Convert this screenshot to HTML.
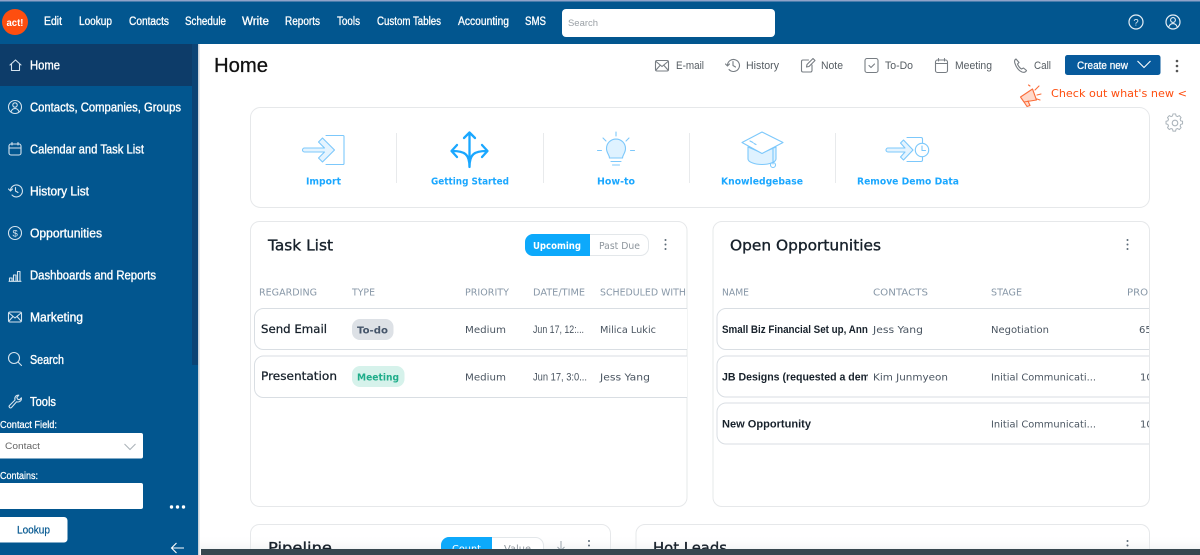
<!DOCTYPE html>
<html lang="en">
<head>
<meta charset="utf-8">
<title>Home</title>
<style>
html,body{margin:0;padding:0;width:1200px;height:555px;overflow:hidden;background:#fff}
svg{display:block}
text{font-family:"Liberation Sans",sans-serif;white-space:pre}
.nav{font-size:11.5px;fill:#fff;stroke:#fff;stroke-width:.3}
.side{font-size:13px;fill:#fff;stroke:#fff;stroke-width:.35}
.tool{font-size:11px;fill:#555c62}
.pop{font-family:"DejaVu Sans",sans-serif}
.ql{font-family:"DejaVu Sans",sans-serif;font-size:10px;fill:#1aa7ff;font-weight:bold}
.hd{font-family:"DejaVu Sans",sans-serif;font-size:10px;fill:#8797a7}
.td{font-family:"DejaVu Sans",sans-serif;font-size:10px;fill:#4a5561}
.dt{font-family:"Liberation Sans",sans-serif;font-size:11px;fill:#4a5561}
.tb{font-family:"Liberation Sans",sans-serif;font-size:11px;fill:#17212b;font-weight:bold}
.rn{font-family:"DejaVu Sans",sans-serif;font-size:11.5px;fill:#17212b;stroke:#17212b;stroke-width:.25}
.ti{font-family:"DejaVu Sans",sans-serif;font-size:15px;fill:#17212b;stroke:#17212b;stroke-width:.35}
.si{fill:none;stroke:#d5e3ee;stroke-width:1.1;stroke-linecap:round;stroke-linejoin:round}
.gi{fill:none;stroke:#777d83;stroke-width:1.1;stroke-linecap:round;stroke-linejoin:round}
.bi{fill:none;stroke:#7cc8fb;stroke-width:1.1;stroke-linecap:round;stroke-linejoin:round}
</style>
</head>
<body>
<svg width="1200" height="555" viewBox="0 0 1200 555" xmlns="http://www.w3.org/2000/svg">
<defs>
<clipPath id="c1"><rect x="250" y="221" width="437" height="286"/></clipPath>
<clipPath id="c2"><rect x="713" y="221" width="436" height="286"/></clipPath>
<clipPath id="c3"><rect x="722" y="300" width="146" height="150"/></clipPath>
<linearGradient id="fade" x1="0" y1="0" x2="0" y2="1"><stop offset="0" stop-color="#fff" stop-opacity="0"/><stop offset="1" stop-color="#dfe2e4" stop-opacity="1"/></linearGradient>
</defs>

<rect width="1200" height="555" fill="#fff"/>

<!-- Top bar -->
<rect width="1200" height="44" fill="#02568f"/>
<rect width="1200" height="1.5" fill="#8fa3c9"/>
<circle cx="15" cy="22" r="13" fill="#fe4e0f"/>
<text x="6.5" y="26" font-size="10.5" font-weight="bold" fill="#fff" textLength="17" lengthAdjust="spacingAndGlyphs">act!</text>
<text class="nav" x="44" y="25" textLength="18" lengthAdjust="spacingAndGlyphs">Edit</text>
<text class="nav" x="79" y="25" textLength="33" lengthAdjust="spacingAndGlyphs">Lookup</text>
<text class="nav" x="129" y="25" textLength="40" lengthAdjust="spacingAndGlyphs">Contacts</text>
<text class="nav" x="185" y="25" textLength="41" lengthAdjust="spacingAndGlyphs">Schedule</text>
<text class="nav" x="242" y="25" textLength="27" lengthAdjust="spacingAndGlyphs">Write</text>
<text class="nav" x="285" y="25" textLength="35" lengthAdjust="spacingAndGlyphs">Reports</text>
<text class="nav" x="337" y="25" textLength="23" lengthAdjust="spacingAndGlyphs">Tools</text>
<text class="nav" x="377" y="25" textLength="64" lengthAdjust="spacingAndGlyphs">Custom Tables</text>
<text class="nav" x="458" y="25" textLength="51" lengthAdjust="spacingAndGlyphs">Accounting</text>
<text class="nav" x="525" y="25" textLength="21" lengthAdjust="spacingAndGlyphs">SMS</text>
<rect x="562" y="9" width="213" height="28" rx="4" fill="#fff"/>
<text x="568" y="26" font-size="9" fill="#9aa0a6" textLength="30" lengthAdjust="spacingAndGlyphs">Search</text>
<!-- help / user -->
<circle cx="1136" cy="22" r="7" fill="none" stroke="#e6eef5" stroke-width="1.2"/>
<text x="1133.4" y="25.5" font-size="9.5" fill="#e6eef5">?</text>
<circle cx="1173" cy="22" r="7" fill="none" stroke="#e6eef5" stroke-width="1.2"/>
<circle cx="1173" cy="20" r="2.4" fill="none" stroke="#e6eef5" stroke-width="1.1"/>
<path d="M1168.8 27c.8-2.500 2.300-3.400 4.200-3.400s3.400.9 4.200 3.400" fill="none" stroke="#e6eef5" stroke-width="1.1"/>

<!-- Sidebar -->
<rect x="0" y="44" width="198" height="511" fill="#02568f"/>
<rect x="192" y="44" width="6" height="321" fill="#0c4475"/>
<rect x="0" y="44" width="192" height="42" fill="#0d3c69"/>
<rect x="198" y="44" width="1.5" height="511" fill="#c9d2da"/>

<path class="si" d="M10 65l5.500-5 5.500 5M11.500 64v6.500h8V64"/>
<text class="side" x="30" y="69.500" textLength="30" lengthAdjust="spacingAndGlyphs">Home</text>
<circle class="si" cx="15" cy="107" r="6.500"/><circle class="si" cx="15" cy="105" r="2.200"/><path class="si" d="M11 112c.7-2.600 2.200-3.500 4-3.500s3.300.9 4 3.500"/>
<text class="side" x="30" y="111.500" textLength="151" lengthAdjust="spacingAndGlyphs">Contacts, Companies, Groups</text>
<rect class="si" x="9" y="144" width="12" height="11" rx="2"/><path class="si" d="M9 148h12M12 142.500v2.500M18 142.500v2.500"/>
<text class="side" x="30" y="153.500" textLength="114" lengthAdjust="spacingAndGlyphs">Calendar and Task List</text>
<path class="si" d="M10.500 190a6 6 0 1 1 1.500 5M8.500 189l2 2 2-2M15.500 187.500v3.500l2.500 1.500"/>
<text class="side" x="30" y="195.500" textLength="59" lengthAdjust="spacingAndGlyphs">History List</text>
<circle class="si" cx="15" cy="233" r="6.500"/>
<text x="12.500" y="236.500" font-size="9.500" fill="#d5e3ee">$</text>
<text class="side" x="30" y="237.500" textLength="72" lengthAdjust="spacingAndGlyphs">Opportunities</text>
<path class="si" d="M9.500 281v-3h2.500v3M13.500 281v-6h2.500v6M17.500 281v-9.500h2.500v9.500M9 281.300h12"/>
<text class="side" x="30" y="279.500" textLength="126" lengthAdjust="spacingAndGlyphs">Dashboards and Reports</text>
<rect class="si" x="8.500" y="312" width="13" height="10" rx="1.500"/><path class="si" d="M9 313l6 5 6-5M9 321l4-4.500M21 321l-4-4.500"/>
<text class="side" x="30" y="321.500" textLength="53" lengthAdjust="spacingAndGlyphs">Marketing</text>
<circle class="si" cx="14" cy="358" r="5.500"/><path class="si" d="M18 362l3.500 3.500"/>
<text class="side" x="30" y="364" textLength="34" lengthAdjust="spacingAndGlyphs">Search</text>
<path class="si" d="M9.500 405.500l5.500-5.500c-.8-2.500.8-5 3.800-4.800l-2 2.300.8 1.700 1.800.6 2-2c.4 3-2 4.800-4.800 4L11.500 407.500c-1.300 1.200-3.200-.7-2-2z"/>
<text class="side" x="30" y="406" textLength="26" lengthAdjust="spacingAndGlyphs">Tools</text>

<text x="0" y="428" font-size="10" fill="#fff" stroke="#fff" stroke-width=".25" textLength="57" lengthAdjust="spacingAndGlyphs">Contact Field:</text>
<rect x="-3" y="433" width="146" height="25.500" rx="2" fill="#fff"/>
<text x="5" y="449" font-size="9.500" fill="#666" textLength="35" lengthAdjust="spacingAndGlyphs">Contact</text>
<path d="M124.500 444l5.500 5.500 5.500-5.500" fill="none" stroke="#aab2b8" stroke-width="1"/>
<text x="0" y="479" font-size="10" fill="#fff" stroke="#fff" stroke-width=".25" textLength="38" lengthAdjust="spacingAndGlyphs">Contains:</text>
<rect x="-3" y="483" width="146" height="26" rx="2" fill="#fff"/>
<circle cx="171.500" cy="507" r="1.700" fill="#fff"/><circle cx="177.500" cy="507" r="1.700" fill="#fff"/><circle cx="183.500" cy="507" r="1.700" fill="#fff"/>
<rect x="-3" y="517" width="70.500" height="25.500" rx="3.500" fill="#fff"/>
<text x="17" y="533.500" font-size="11" fill="#02568f" stroke="#02568f" stroke-width=".2" textLength="33" lengthAdjust="spacingAndGlyphs">Lookup</text>
<path d="M184 548h-12.500M176.500 543l-5 5 5 5" fill="none" stroke="#fff" stroke-width="1.100"/>

<!-- Header -->
<text x="214" y="72" font-size="20" fill="#111" stroke="#111" stroke-width=".3" textLength="54" lengthAdjust="spacingAndGlyphs">Home</text>

<rect class="gi" x="655.500" y="60.500" width="13" height="10.500" rx="1.500"/><path class="gi" d="M656 61.500l6 5 6-5M656 70l4-4.500M668 70l-4-4.500"/>
<text class="tool" x="676" y="69" textLength="28" lengthAdjust="spacingAndGlyphs">E-mail</text>
<path class="gi" d="M727.500 65a6 6 0 1 1 1.500 4.500M725.500 64l2 2 2-2M733 61.500V65.500l2.500 1.500"/>
<text class="tool" x="746" y="69" textLength="33" lengthAdjust="spacingAndGlyphs">History</text>
<path class="gi" d="M812 65v5.500a1.500 1.500 0 0 1-1.500 1.500h-7.500a1.500 1.500 0 0 1-1.500-1.500v-9a1.500 1.500 0 0 1 1.500-1.500h5.500M806.500 67l.5-2.500 6-6 2 2-6 6z"/>
<text class="tool" x="821" y="69" textLength="22" lengthAdjust="spacingAndGlyphs">Note</text>
<rect class="gi" x="865" y="58.500" width="13" height="14" rx="2"/><path class="gi" d="M869 65.500l2 2 3.500-3.500"/>
<text class="tool" x="885" y="69" textLength="28" lengthAdjust="spacingAndGlyphs">To-Do</text>
<rect class="gi" x="935.500" y="60" width="12" height="12.500" rx="2"/><path class="gi" d="M935.500 63.500h12M938.500 58.500v2.500M944.500 58.500v2.500"/>
<text class="tool" x="955" y="69" textLength="37" lengthAdjust="spacingAndGlyphs">Meeting</text>
<path class="gi" d="M1016 59c-1.500.8-1.800 2.300-1 4.500 1.200 3.500 3.600 7 7 8.500 1.800.7 3.800.3 4.500-1.500l-3-2.500-2 1c-1.800-1-3.200-3-4-5l1.500-1.500z"/>
<text class="tool" x="1034" y="69" textLength="17" lengthAdjust="spacingAndGlyphs">Call</text>
<rect x="1065" y="55" width="95.500" height="20" rx="2.500" fill="#075a9c"/>
<text x="1077" y="69" font-size="11" fill="#fff" stroke="#fff" stroke-width=".25" textLength="51" lengthAdjust="spacingAndGlyphs">Create new</text>
<path d="M1137.500 61l6.500 6.500 6.500-6.500" fill="none" stroke="#fff" stroke-width="1.100"/>
<circle cx="1177" cy="61" r="1.300" fill="#555"/><circle cx="1177" cy="66" r="1.300" fill="#555"/><circle cx="1177" cy="71" r="1.300" fill="#555"/>

<!-- Megaphone -->
<path d="M1020.500 97l12-8 4 11-12.500 2zM1024 102l3 4.500 3-1-2-4.500M1030 86l-1.500-1M1035 90l4-4M1037 95l4-1M1037 99l3 1" fill="#ffd9ca" stroke="#fb6d3a" stroke-width="1.100" stroke-linejoin="round" stroke-linecap="round"/>
<text x="1051" y="97" font-size="11" fill="#fe4e0f" textLength="136" lengthAdjust="spacingAndGlyphs" style="font-family:'DejaVu Sans',sans-serif">Check out what's new &lt;</text>
<!-- Gear -->
<circle cx="1175" cy="123" r="2.800" fill="none" stroke="#a9b2b9" stroke-width="1.100"/>
<path d="M1173.500 115.500h3l.5 2.200 1.700.8 2-1.100 2 2.200-1.100 1.900.7 1.800 2.100.5v3l-2.100.6-.7 1.700 1.100 2-2 2.100-2-1.100-1.700.7-.5 2.200h-3l-.5-2.200-1.700-.7-2 1.100-2-2.100 1.100-2-.7-1.700-2.100-.6v-3l2.100-.5.7-1.800-1.100-1.900 2-2.200 2 1.100 1.700-.8z" transform="translate(140.300 12.300) scale(.88)" fill="none" stroke="#a9b2b9" stroke-width="1.100"/>

<!-- Quick links card -->
<rect x="250.500" y="107.500" width="899" height="100" rx="10" fill="#fff" stroke="#e6e8ea"/>
<path d="M396.500 133v50M543.500 133v50M689.500 133v50M835.500 133v50" stroke="#e8eaec" stroke-width="1"/>

<!-- Import -->
<path class="bi" d="M326 135.500h17a1 1 0 0 1 1 1v27a1 1 0 0 1-1 1h-17"/>
<path d="M304.500 148h20l-6-6 4-4 12 12-12 12-4-4 6-6h-20a2 2 0 0 1 0-4z" fill="#e5f4ff" stroke="#7cc8fb" stroke-width="1.100" stroke-linejoin="round"/>
<text class="ql" x="306" y="184.500" textLength="35" lengthAdjust="spacingAndGlyphs">Import</text>

<!-- Getting Started -->
<path d="M469.500 167v-33M464 138l5.500-5.500 5.500 5.500M469.500 167c0-13-5-16-17-16M457 145l-5.500 6 5.500 6M469.500 167c0-13 5-16 17-16M482 145l5.500 6-5.500 6" fill="none" stroke="#1aa7ff" stroke-width="2.300" stroke-linecap="round" stroke-linejoin="round"/>
<text class="ql" x="431" y="184.500" textLength="78" lengthAdjust="spacingAndGlyphs">Getting Started</text>

<!-- How-to -->
<path d="M609.500 158c0-3-3-5-3-9.500a9.500 9.500 0 0 1 19 0c0 4.500-3 6.500-3 9.500z" fill="#dff2ff" stroke="#7cc8fb" stroke-width="1.100"/>
<path class="bi" d="M611 161.500h10M612.500 165h7M616 132v4M603 138l3 3M629 138l-3 3M597.500 150.500h4M630.500 150.500h4"/>
<text class="ql" x="597" y="184.500" textLength="38" lengthAdjust="spacingAndGlyphs">How-to</text>

<!-- Knowledgebase -->
<path d="M748 147v12c0 3 7 5.500 14 5.500s14-2.500 14-5.500v-12l-14 6z" fill="#dff2ff" stroke="#7cc8fb" stroke-width="1.100" stroke-linejoin="round"/>
<path d="M742 142.500l20-10.500 21 10.500-21 11z" fill="#fff" stroke="#7cc8fb" stroke-width="1.100" stroke-linejoin="round"/>
<path class="bi" d="M773 149v15M750 141l3 1.500M754 143.500l2 1"/>
<circle class="bi" cx="773" cy="165" r="2.500"/>
<text class="ql" x="721" y="184.500" textLength="82" lengthAdjust="spacingAndGlyphs">Knowledgebase</text>

<!-- Remove Demo Data -->
<path class="bi" d="M907 137.500h14a1.500 1.500 0 0 1 1.500 1.500v5M922.500 156v4a1.500 1.500 0 0 1-1.500 1.500h-14"/>
<path d="M888 148h17l-4.500-5 3-3 9.500 10-9.500 10-3-3 4.500-5h-17a2 2 0 0 1 0-4z" fill="#e5f4ff" stroke="#7cc8fb" stroke-width="1.100" stroke-linejoin="round"/>
<circle cx="922" cy="150" r="6.700" fill="#fff" stroke="#7cc8fb" stroke-width="1.100"/>
<path class="bi" d="M922 146v4.500h3.500"/>
<text class="ql" x="857" y="184.500" textLength="102" lengthAdjust="spacingAndGlyphs">Remove Demo Data</text>

<!-- Task List card -->
<rect x="250.500" y="221.500" width="436.500" height="285" rx="9" fill="#fff" stroke="#e6e8ea"/>
<text class="ti" x="268" y="250.500" textLength="65" lengthAdjust="spacingAndGlyphs">Task List</text>
<rect x="525.500" y="234.500" width="123" height="21" rx="8" fill="#fff" stroke="#e3e7ea"/>
<path d="M533 234h57v22h-57a8 8 0 0 1-8-8v-6a8 8 0 0 1 8-8z" fill="#0da9fb"/>
<text x="533" y="249" class="pop" font-size="10" font-weight="bold" fill="#fff" textLength="48" lengthAdjust="spacingAndGlyphs">Upcoming</text>
<text x="599" y="249" class="pop" font-size="10" fill="#8d959c" textLength="41" lengthAdjust="spacingAndGlyphs">Past Due</text>
<circle cx="665.500" cy="240" r="1" fill="#5c6a77"/><circle cx="665.500" cy="244.500" r="1" fill="#5c6a77"/><circle cx="665.500" cy="249" r="1" fill="#5c6a77"/>

<g clip-path="url(#c1)">
<text class="hd" x="259" y="295.500" textLength="58" lengthAdjust="spacingAndGlyphs">REGARDING</text>
<text class="hd" x="352" y="295.500" textLength="23" lengthAdjust="spacingAndGlyphs">TYPE</text>
<text class="hd" x="465" y="295.500" textLength="44" lengthAdjust="spacingAndGlyphs">PRIORITY</text>
<text class="hd" x="533" y="295.500" textLength="52" lengthAdjust="spacingAndGlyphs">DATE/TIME</text>
<text class="hd" x="600" y="295.500" textLength="86" lengthAdjust="spacingAndGlyphs">SCHEDULED WITH</text>
<rect x="254.500" y="308.500" width="460" height="41" rx="9" fill="#fff" stroke="#d9dee3"/>
<rect x="254.500" y="356" width="460" height="41.500" rx="9" fill="#fff" stroke="#d9dee3"/>
<text class="rn" x="261" y="333" textLength="66" lengthAdjust="spacingAndGlyphs">Send Email</text>
<rect x="352" y="319" width="41.500" height="21" rx="8" fill="#dde1e6"/>
<text x="357" y="333.500" class="pop" font-size="10" font-weight="bold" fill="#45556a" textLength="31" lengthAdjust="spacingAndGlyphs">To-do</text>
<text class="td" x="465" y="333" textLength="41" lengthAdjust="spacingAndGlyphs">Medium</text>
<text class="dt" x="533" y="333" textLength="51" lengthAdjust="spacingAndGlyphs">Jun 17, 12:...</text>
<text class="td" x="600" y="333" textLength="56" lengthAdjust="spacingAndGlyphs">Milica Lukic</text>
<text class="rn" x="261" y="380" textLength="76" lengthAdjust="spacingAndGlyphs">Presentation</text>
<rect x="352" y="366" width="52.500" height="21" rx="8" fill="#d6f2eb"/>
<text x="357" y="380.500" class="pop" font-size="10" font-weight="bold" fill="#1fad8a" textLength="42" lengthAdjust="spacingAndGlyphs">Meeting</text>
<text class="td" x="465" y="380.500" textLength="41" lengthAdjust="spacingAndGlyphs">Medium</text>
<text class="dt" x="533" y="380.500" textLength="54" lengthAdjust="spacingAndGlyphs">Jun 17, 3:0...</text>
<text class="td" x="600" y="380.500" textLength="50" lengthAdjust="spacingAndGlyphs">Jess Yang</text>
</g>

<!-- Open Opportunities card -->
<rect x="713" y="221.500" width="436.500" height="285" rx="9" fill="#fff" stroke="#e6e8ea"/>
<text class="ti" x="730" y="250.500" textLength="151" lengthAdjust="spacingAndGlyphs">Open Opportunities</text>
<circle cx="1127.500" cy="240" r="1" fill="#5c6a77"/><circle cx="1127.500" cy="244.500" r="1" fill="#5c6a77"/><circle cx="1127.500" cy="249" r="1" fill="#5c6a77"/>

<g clip-path="url(#c2)">
<text class="hd" x="722" y="295.500" textLength="27" lengthAdjust="spacingAndGlyphs">NAME</text>
<text class="hd" x="873" y="295.500" textLength="55" lengthAdjust="spacingAndGlyphs">CONTACTS</text>
<text class="hd" x="991" y="295.500" textLength="31" lengthAdjust="spacingAndGlyphs">STAGE</text>
<text class="hd" x="1127" y="295.500" textLength="66" lengthAdjust="spacingAndGlyphs">PROBABILITY</text>
<rect x="717" y="308.500" width="470" height="41" rx="9" fill="#fff" stroke="#d9dee3"/>
<rect x="717" y="356" width="470" height="41" rx="9" fill="#fff" stroke="#d9dee3"/>
<rect x="717" y="403" width="470" height="41" rx="9" fill="#fff" stroke="#d9dee3"/>
<text class="td" x="873" y="333" textLength="50" lengthAdjust="spacingAndGlyphs">Jess Yang</text>
<text class="td" x="991" y="333" textLength="58" lengthAdjust="spacingAndGlyphs">Negotiation</text>
<text class="td" x="1139" y="333">65%</text>
<text class="td" x="873" y="380.500" textLength="75" lengthAdjust="spacingAndGlyphs">Kim Junmyeon</text>
<text class="td" x="991" y="380.500" textLength="105" lengthAdjust="spacingAndGlyphs">Initial Communicati...</text>
<text class="td" x="1140" y="380.500">10%</text>
<text class="td" x="991" y="427.500" textLength="105" lengthAdjust="spacingAndGlyphs">Initial Communicati...</text>
<text class="td" x="1140" y="427.500">10%</text>
</g>
<g clip-path="url(#c3)">
<text class="tb" x="722" y="333" textLength="160" lengthAdjust="spacingAndGlyphs">Small Biz Financial Set up, Annual</text>
<text class="tb" x="722" y="380.500" textLength="158" lengthAdjust="spacingAndGlyphs">JB Designs (requested a demo)</text>
<text class="tb" x="722" y="427.500" textLength="89" lengthAdjust="spacingAndGlyphs">New Opportunity</text>
</g>

<!-- Bottom cards -->
<rect x="200" y="535" width="1000" height="14" fill="url(#fade)" opacity=".35"/>
<rect x="250.500" y="524.500" width="360" height="40" rx="9" fill="none" stroke="#e6e8ea"/>
<rect x="636" y="524.500" width="513.500" height="40" rx="9" fill="none" stroke="#e6e8ea"/>
<text class="ti" x="268" y="553" textLength="64" lengthAdjust="spacingAndGlyphs">Pipeline</text>
<text class="ti" x="653" y="553" textLength="74" lengthAdjust="spacingAndGlyphs">Hot Leads</text>
<rect x="441.500" y="537.500" width="102" height="21" rx="8" fill="#fff" stroke="#e3e7ea"/>
<path d="M449 537h43v22h-51v-14a8 8 0 0 1 8-8z" fill="#0da9fb"/>
<text x="452" y="552" class="pop" font-size="10" fill="#fff" textLength="29" lengthAdjust="spacingAndGlyphs">Count</text>
<text x="504" y="552" class="pop" font-size="10" fill="#8d959c" textLength="27" lengthAdjust="spacingAndGlyphs">Value</text>
<path d="M561 541v9M557.500 547l3.500 3.500 3.500-3.500" fill="none" stroke="#9aa4ac" stroke-width="1"/>
<circle cx="589" cy="541" r="1" fill="#5c6a77"/><circle cx="589" cy="545.500" r="1" fill="#5c6a77"/>
<circle cx="1127.500" cy="541" r="1" fill="#5c6a77"/><circle cx="1127.500" cy="545.500" r="1" fill="#5c6a77"/>

<!-- Bottom bar -->
<rect x="201" y="549" width="999" height="6" fill="#37474f"/>
</svg>
</body>
</html>
